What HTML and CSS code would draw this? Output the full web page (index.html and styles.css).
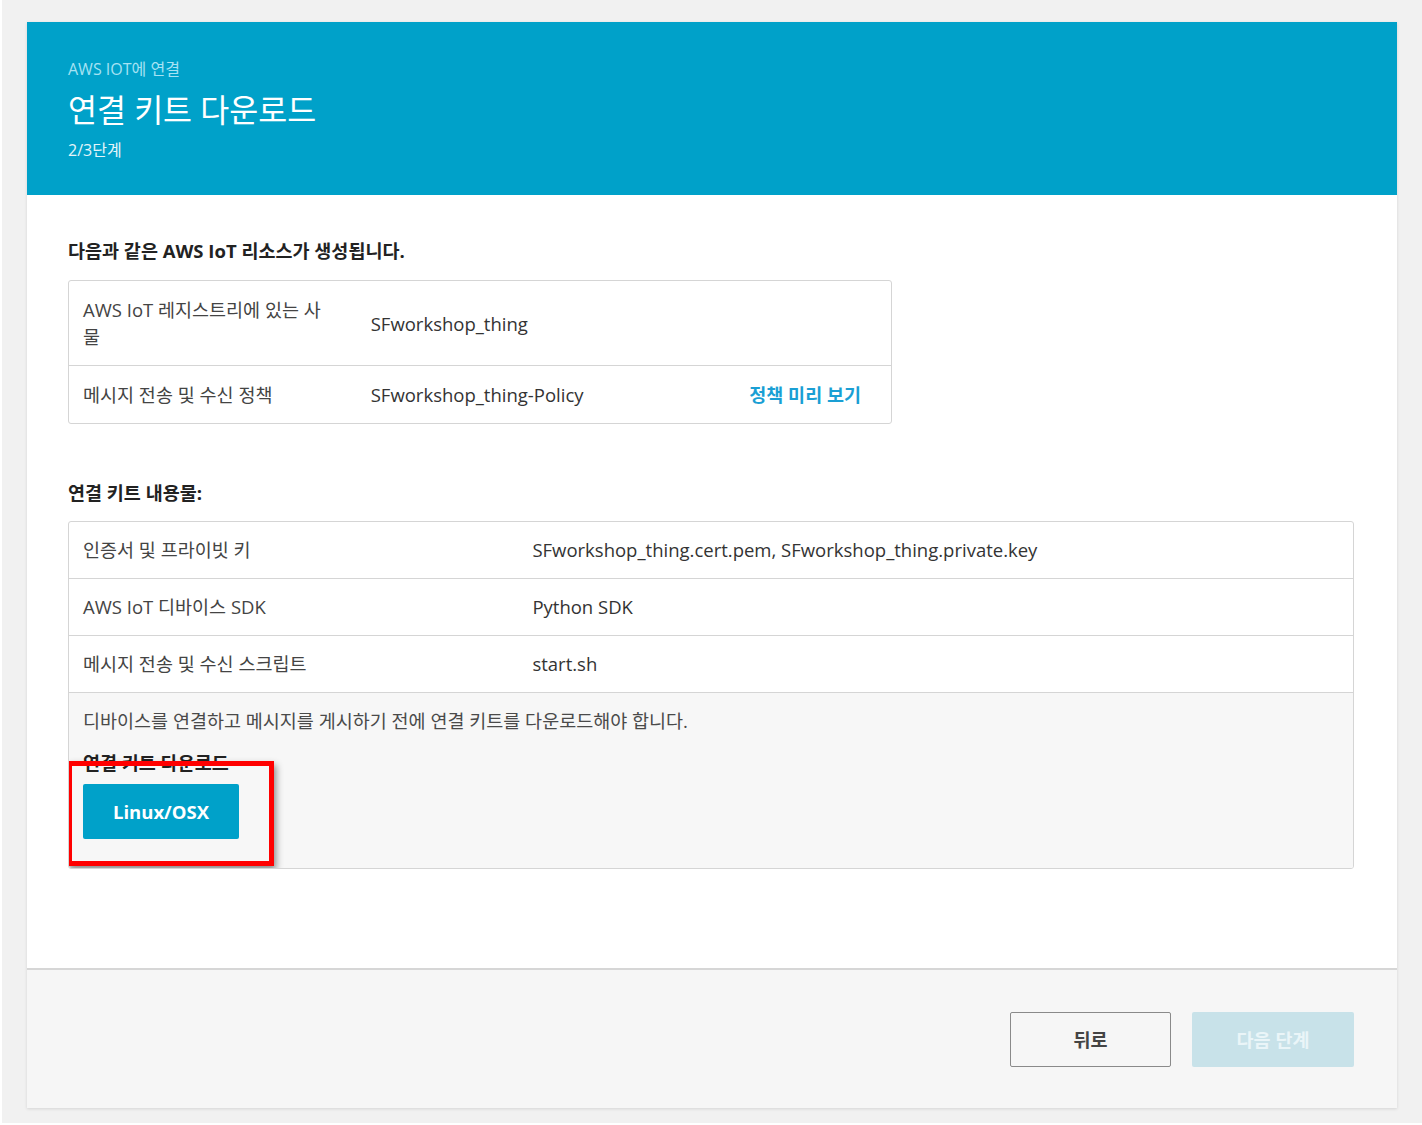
FILE: index.html
```html
<!DOCTYPE html>
<html lang="ko">
<head>
<meta charset="utf-8">
<title>연결 키트 다운로드</title>
<link rel="stylesheet" href="styles.css">
</head>
<body>
<div class="page">
  <div class="card">
    <header class="card-header">
      <p class="crumb">AWS IOT에 연결</p>
      <h1 class="title">연결 키트 다운로드</h1>
      <p class="step">2/3단계</p>
    </header>

    <main class="card-body">
      <h2 class="section-title">다음과 같은 AWS IoT 리소스가 생성됩니다.</h2>
      <div class="table resources">
        <div class="row">
          <div class="cell label">AWS IoT 레지스트리에 있는 사물</div>
          <div class="cell value">SFworkshop_thing</div>
          <div class="cell action"></div>
        </div>
        <div class="row">
          <div class="cell label">메시지 전송 및 수신 정책</div>
          <div class="cell value">SFworkshop_thing-Policy</div>
          <div class="cell action"><a class="link" href="#">정책 미리 보기</a></div>
        </div>
      </div>

      <h2 class="section-title second">연결 키트 내용물:</h2>
      <div class="table kit">
        <div class="row two">
          <div class="cell label">인증서 및 프라이빗 키</div>
          <div class="cell value">SFworkshop_thing.cert.pem, SFworkshop_thing.private.key</div>
        </div>
        <div class="row two">
          <div class="cell label">AWS IoT 디바이스 SDK</div>
          <div class="cell value">Python SDK</div>
        </div>
        <div class="row two">
          <div class="cell label">메시지 전송 및 수신 스크립트</div>
          <div class="cell value">start.sh</div>
        </div>
        <div class="download">
          <p class="note">디바이스를 연결하고 메시지를 게시하기 전에 연결 키트를 다운로드해야 합니다.</p>
          <p class="download-title">연결 키트 다운로드</p>
          <button class="btn btn-primary" type="button">Linux/OSX</button>
          <div class="highlight"></div>
        </div>
      </div>
    </main>

    <footer class="card-footer">
      <button class="btn btn-secondary" type="button">뒤로</button>
      <button class="btn btn-disabled" type="button">다음 단계</button>
    </footer>
  </div>
</div>
</body>
</html>
```

FILE: styles.css
```css
* { box-sizing: border-box; }

html, body {
  margin: 0;
  padding: 0;
  background: #ffffff;
}

body {
  font-family: "Open Sans", "Noto Sans CJK KR", sans-serif;
  font-size: 18.5px;
  line-height: 27px;
  color: #333333;
}

.page {
  margin-left: 2px;
  height: 1123px;
  background: #f1f1f1;
  padding: 22px 0 0 25px;
}

.card {
  width: 1370px;
  background: #ffffff;
  box-shadow: 0 1px 3px rgba(0, 0, 0, 0.12);
}

/* header */
.card-header {
  background: #00a1c9;
  height: 173px;
  padding: 36px 41px 0;
}

.crumb {
  margin: 0;
  font-size: 16px;
  line-height: 22px;
  color: #a6e2f3;
}

.title {
  margin: 8px 0 0;
  font-size: 31.5px;
  line-height: 44px;
  font-weight: 400;
  color: #ffffff;
}

.step {
  margin: 7px 0 0;
  font-size: 16px;
  line-height: 22px;
  color: #e4f5fa;
}

/* body */
.card-body {
  padding: 42px 43px 99px 41px;
}

.section-title {
  margin: 0 0 16px;
  font-size: 18.5px;
  line-height: 27px;
  font-weight: 700;
  color: #222222;
}

.section-title.second {
  margin-top: 55px;
  margin-bottom: 15px;
}

.table {
  border: 1px solid #d5d5d5;
  border-radius: 3px;
  overflow: hidden;
}

.resources {
  width: 824px;
}

.row {
  display: grid;
  grid-template-columns: 35% 1fr auto;
  border-bottom: 1px solid #d5d5d5;
}

.row:last-child {
  border-bottom: none;
}

.row.two {
  grid-template-columns: 35% 1fr;
}

.cell {
  padding: 14px 14px 15px 14px;
}

.resources .cell {
  padding-top: 15px;
}

.resources .label {
  padding-right: 30px;
}

.label {
  color: #444444;
}

.value {
  color: #333333;
  align-self: center;
}

.action {
  align-self: center;
  padding-right: 30px;
}

.link {
  color: #1a9fd4;
  font-weight: 700;
  text-decoration: none;
}

/* download area */
.download {
  position: relative;
  background: #f7f7f7;
  padding: 14px 14px 29px;
}

.note {
  margin: 0;
  color: #4a4a4a;
}

.download-title {
  margin: 15px 0 0;
  font-weight: 700;
  color: #222222;
}

.btn {
  font-family: "Open Sans", "Noto Sans CJK KR", sans-serif;
  font-size: 18.5px;
  font-weight: 700;
  border-radius: 2px;
  cursor: pointer;
}

.btn-primary {
  margin-top: 8px;
  width: 156px;
  height: 55px;
  border: none;
  background: #00a1c9;
  color: #ffffff;
}

.highlight {
  position: absolute;
  left: -2px;
  top: 68px;
  width: 207px;
  height: 105px;
  border: 5px solid #ff0000;
  box-shadow: 2px 4px 7px rgba(0, 0, 0, 0.45);
  pointer-events: none;
}

/* footer */
.card-footer {
  border-top: 2px solid #d6d6d6;
  background: #f6f6f6;
  height: 140px;
  display: flex;
  justify-content: flex-end;
  align-items: center;
  gap: 21px;
  padding: 0 43px 0 0;
}

.btn-secondary {
  width: 161px;
  height: 55px;
  background: transparent;
  border: 1px solid #8a8a8a;
  color: #444444;
}

.btn-disabled {
  width: 162px;
  height: 55px;
  border: none;
  background: #c8e2e9;
  color: #eaf5f8;
}
```
